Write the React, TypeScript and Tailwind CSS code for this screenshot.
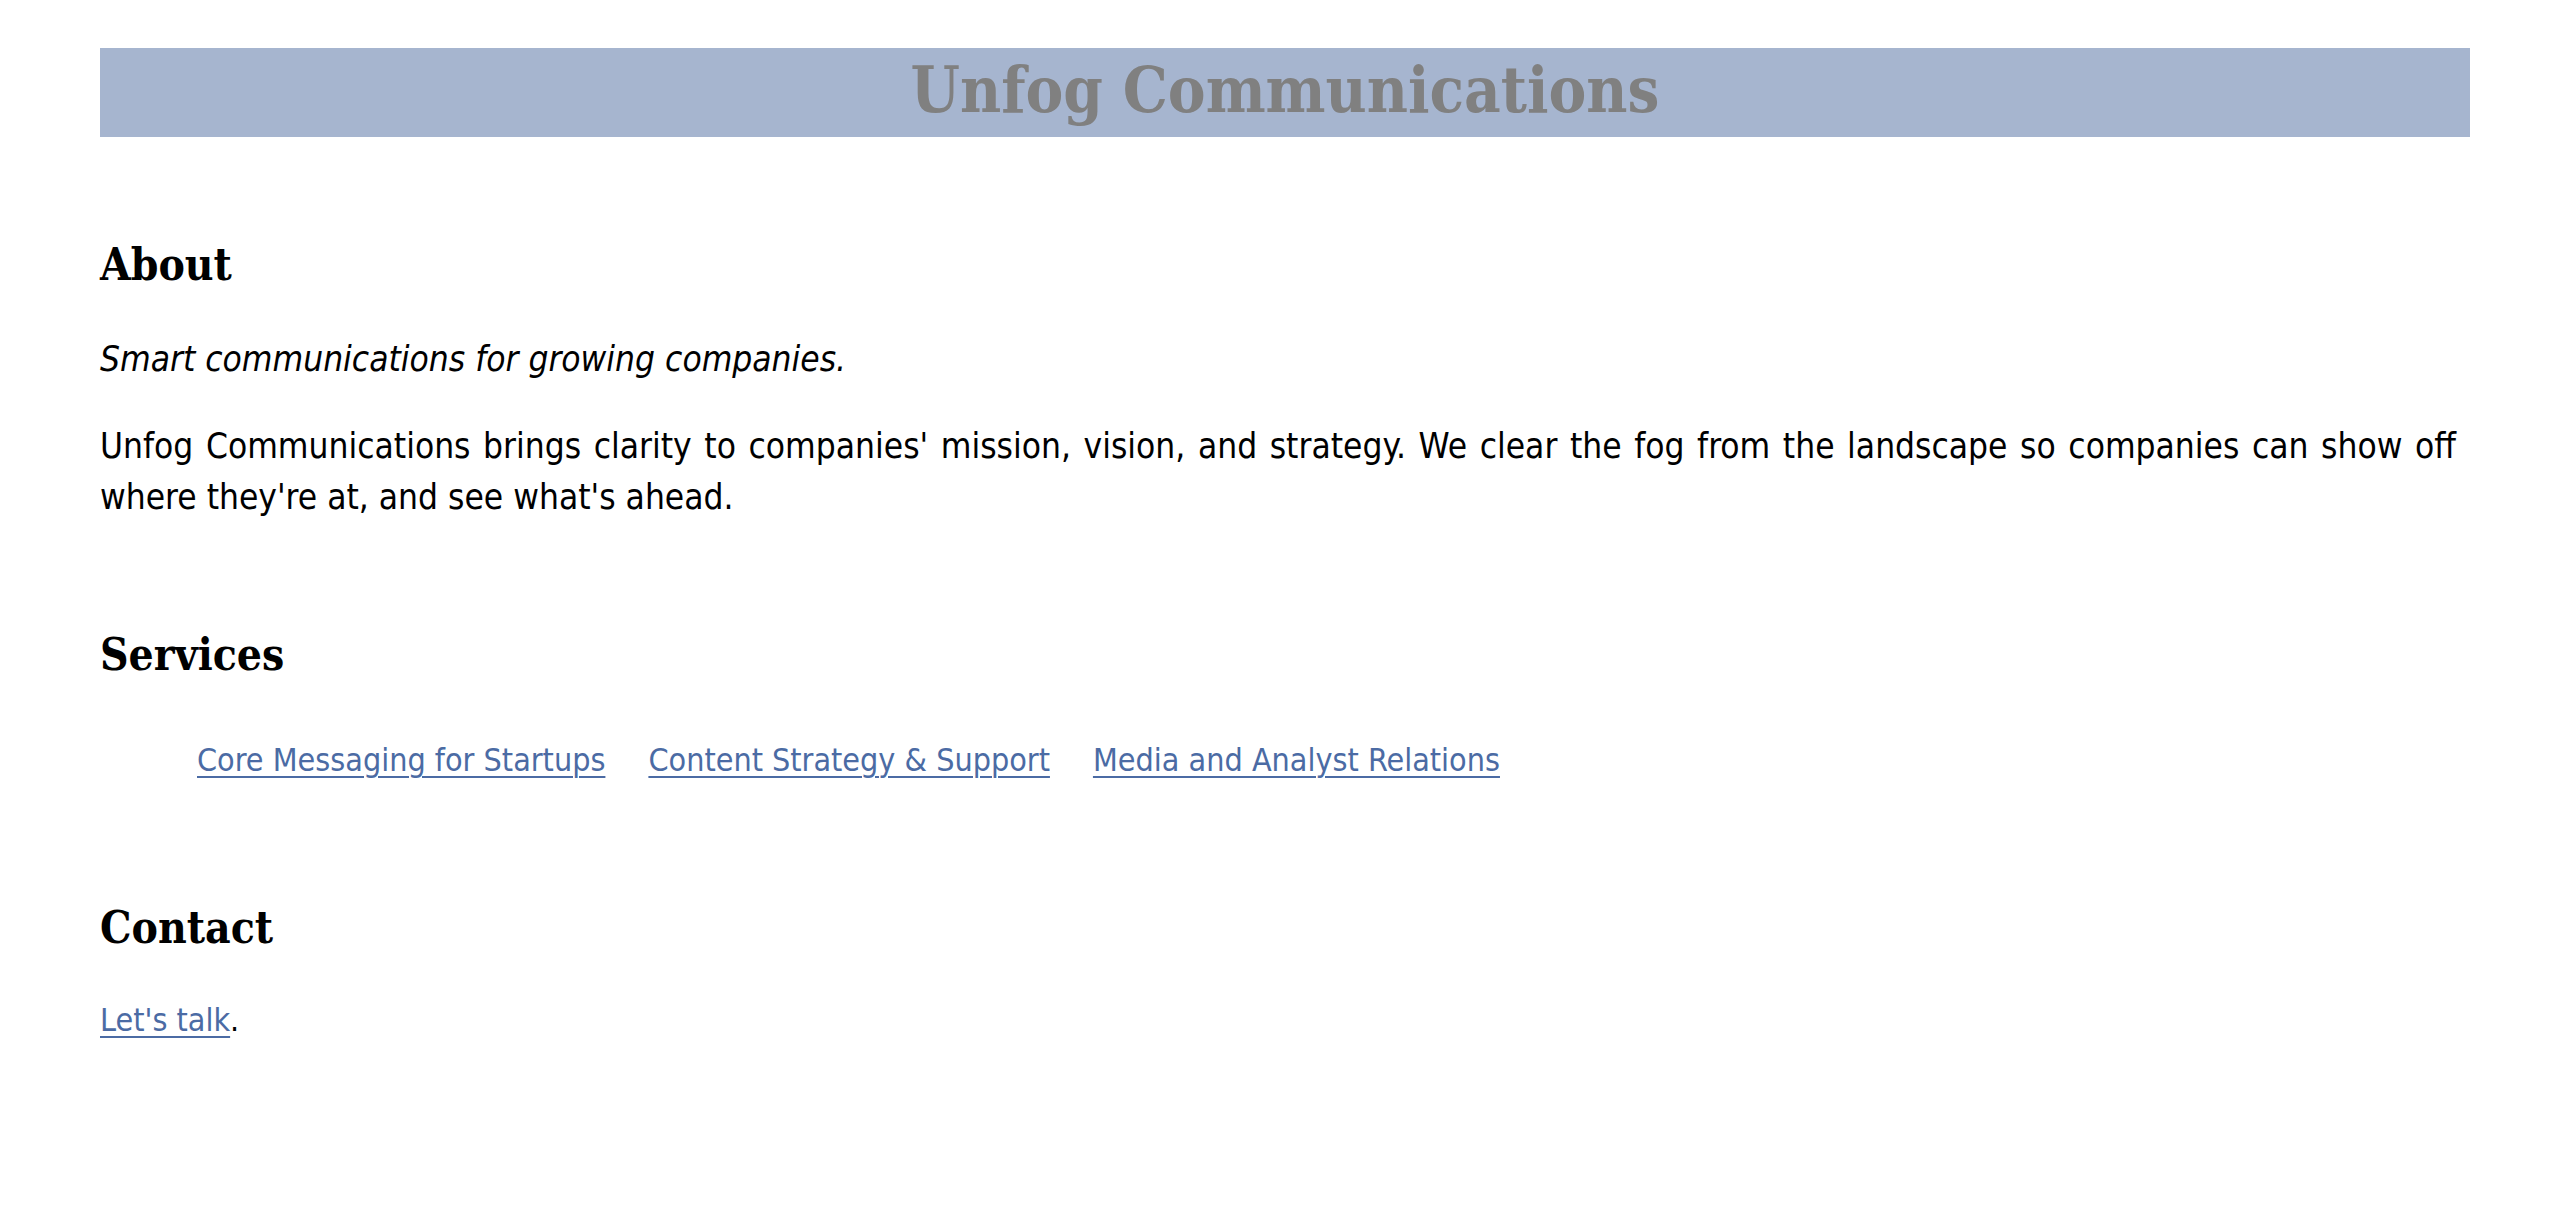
const SERVICES = [
  'Core Messaging for Startups',
  'Content Strategy & Support',
  'Media and Analyst Relations',
]

const headingFont = "font-['DejaVu_Serif_Condensed','DejaVu_Serif',serif]"

export default function App() {
  return (
    <div className="min-h-screen bg-white text-black font-['DejaVu_Sans_Condensed','DejaVu_Sans',sans-serif] pl-[100px] pr-[120px] pt-[48px] pb-16">
      {/* Banner */}
      <header className="mr-[-14px] h-[89px] bg-[#a6b5cf] flex items-center justify-center">
        <h1 className={`${headingFont} font-bold text-[63px] leading-none text-[#808080] pb-[4px]`}>
          Unfog Communications
        </h1>
      </header>

      {/* About */}
      <section>
        <h2 className={`${headingFont} font-bold text-[44px] leading-[52px] mt-[102px]`}>About</h2>
        <p className="italic text-[35px] leading-[51px] mt-[43px]">
          Smart communications for growing companies.
        </p>
        <p className="text-[35px] leading-[51px] mt-[36px] text-justify">
          Unfog Communications brings clarity to companies' mission, vision, and strategy. We clear the fog
          from the landscape so companies can show off where they're at, and see what's ahead.
        </p>
      </section>

      {/* Services */}
      <section>
        <h2 className={`${headingFont} font-bold text-[44px] leading-[52px] mt-[106px]`}>Services</h2>
        <ul className="flex gap-[43px] pl-[97px] mt-[54px] text-[32px] leading-[51px]">
          {SERVICES.map((s) => (
            <li key={s}>
              <a href="#" className="text-[#4b6ba4] underline decoration-2 underline-offset-[5px]">
                {s}
              </a>
            </li>
          ))}
        </ul>
      </section>

      {/* Contact */}
      <section>
        <h2 className={`${headingFont} font-bold text-[44px] leading-[52px] mt-[116px]`}>Contact</h2>
        <p className="text-[32px] leading-[51px] mt-[41px]">
          <a href="#" className="text-[#4b6ba4] underline decoration-2 underline-offset-[5px]">
            Let's talk
          </a>
          .
        </p>
      </section>
    </div>
  )
}
